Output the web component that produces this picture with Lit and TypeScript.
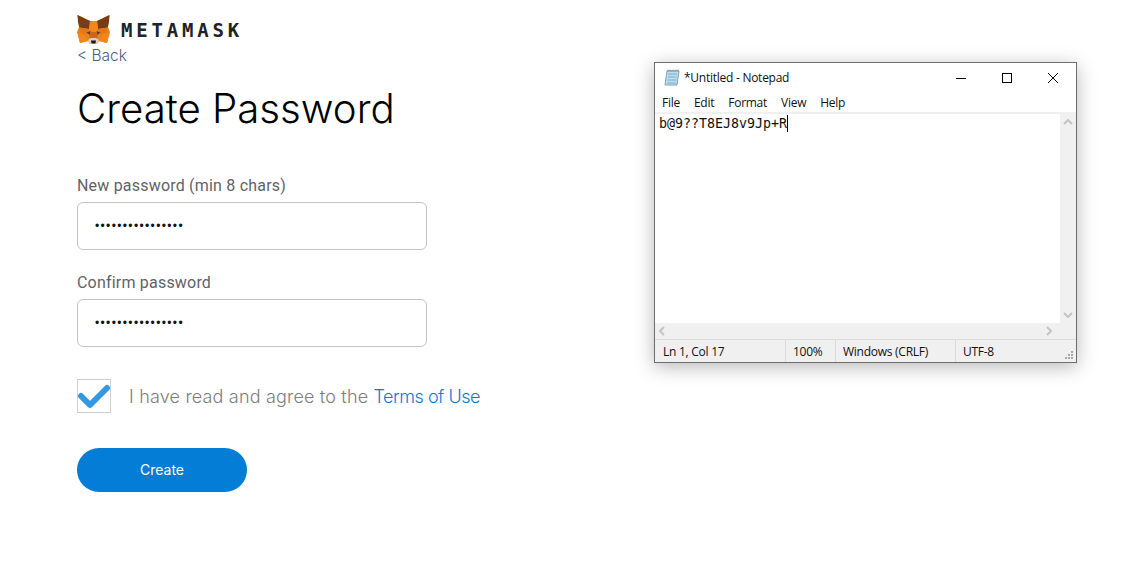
import { LitElement, html, css, svg } from "lit";
import { customElement } from "lit/decorators.js";

const fox = svg`<svg class="fox" viewBox="0 0 33 30" width="33" height="30">
  <polygon points="0.5,0 13,6 20,6 32.5,0 31,12 33,17 30,28 22,26 20,29 13,29 11,26 3,28 0,17 2,12" fill="#e8821e"/>
  <polygon points="0.5,0 13,6 12,14 2.5,12.5 1,7" fill="#763d16"/>
  <polygon points="32.5,0 20,6 21,14 30.5,12.5 32,7" fill="#763d16"/>
  <polygon points="13,6 20,6 21,14 16.5,17 12,14" fill="#f6851b"/>
  <polygon points="2.5,12.5 12,14 10,19 4,18" fill="#e4761b"/>
  <polygon points="30.5,12.5 21,14 23,19 29,18" fill="#e4761b"/>
  <polygon points="9.5,17.5 13.5,16 13,20" fill="#5a4030"/>
  <polygon points="23.5,17.5 19.5,16 20,20" fill="#5a4030"/>
  <polygon points="11,26 3,28 0.5,18 6,19" fill="#f6851b"/>
  <polygon points="22,26 30,28 32.5,18 27,19" fill="#f6851b"/>
  <polygon points="13,17 20,17 20.5,23 12.5,23" fill="#c9651c"/>
  <polygon points="11,25 14,23 19,23 22,25 20,29 13,29" fill="#e0cdbd"/>
  <polygon points="14,25.5 19,25.5 18.5,28.5 14.5,28.5" fill="#1b1b1b"/>
</svg>`;

const check = svg`<svg class="check" viewBox="0 0 34 34" width="34" height="34">
  <polyline points="4,17 13,26 30,9" fill="none" stroke="#3498e0" stroke-width="6" stroke-linejoin="round" stroke-linecap="round"/>
</svg>`;

const notepadIcon = svg`<svg viewBox="0 0 16 17" width="16" height="17">
  <polygon points="3,2 15,2 13,16 1,16" fill="#b9dcee" stroke="#7fa3b5" stroke-width="1"/>
  <path d="M4 5h9M4 8h8.6M3.6 11h8.6M3.2 14h8.6" stroke="#7fb0c9" stroke-width="1"/>
  <path d="M3.5 1.5h11" stroke="#777" stroke-width="1.6" stroke-dasharray="1 1"/>
</svg>`;

@customElement("app-root")
export class AppRoot extends LitElement {
  static styles = css`
    :host { display: block; width: 1123px; height: 577px; background: #fff; position: relative; overflow: hidden; font-family: "Liberation Sans", sans-serif; }
    .page { display: flex; flex-direction: column; align-items: flex-start; padding: 15px 0 0 77px; }
    .brand { display: flex; align-items: center; gap: 11px; height: 30px; }
    .fox { display: block; }
    .word { font-family: "DejaVu Sans Mono", monospace; font-weight: 700; font-size: 19px; letter-spacing: 3.8px; color: #1f2327; line-height: 30px; }
    .back { margin-top: 1px; font-family: Inter, sans-serif; font-weight: 300; font-size: 15.5px; color: #4f5f80; line-height: 20px; }
    h1 { margin: 19px 0 0; font-family: Inter, sans-serif; font-weight: 300; font-size: 40.2px; line-height: 48px; color: #000; }
    .lab { font-family: Roboto, sans-serif; font-size: 16px; letter-spacing: .2px; line-height: 19px; color: #5f6368; }
    .first { margin-top: 43px; }
    .second { margin-top: 23px; }
    .field { margin-top: 7px; box-sizing: border-box; width: 350px; height: 48px; border: 1px solid #c4c4c4; border-radius: 6px; display: flex; align-items: center; padding: 0 17px; font-family: "Liberation Sans", sans-serif; font-size: 12px; letter-spacing: 1.36px; color: #111; }
    .terms { display: flex; align-items: center; gap: 18px; margin-top: 32px; }
    .box { box-sizing: border-box; width: 34px; height: 34px; border: 1px solid #cfcfcf; display: block; }
    .box svg { display: block; margin: -1px; }
    .tt { font-family: Inter, sans-serif; font-weight: 300; font-size: 18px; letter-spacing: .18px; color: #7d7d7d; }
    .tt a { color: #0f78d0; text-decoration: none; letter-spacing: -.47px; }
    .btn { margin-top: 35px; width: 170px; height: 44px; border-radius: 22px; background: #037dd6; color: #fff; display: flex; align-items: center; justify-content: center; font-family: Inter, sans-serif; font-weight: 400; font-size: 14px; padding-bottom: 1px; box-sizing: border-box; }
    .win { position: absolute; left: 654px; top: 62px; width: 423px; height: 301px; box-sizing: border-box; border: 1px solid #6e6e6e; background: #fff; box-shadow: 0 4px 18px rgba(0,0,0,.28); display: flex; flex-direction: column; font-family: "Open Sans", "Noto Sans", sans-serif; font-size: 12px; letter-spacing: -.26px; color: #111; }
    .title { height: 29px; display: flex; align-items: center; padding-left: 9px; flex: none; }
    .title span { flex: 1; margin-left: 4px; }
    .ctl { width: 46px; height: 29px; display: flex; align-items: center; justify-content: center; }
    .menu { height: 20px; display: flex; gap: 14px; align-items: center; padding-left: 7px; flex: none; }
    .edit { flex: 1; display: flex; border-top: 2px solid #f0f0f0; min-height: 0; }
    .text { flex: 1; font-family: "DejaVu Sans Mono", monospace; font-size: 13.3px; letter-spacing: 0; line-height: 17px; padding: 1px 0 0 4px; color: #111; }
    .caret { display: inline-block; width: 1px; height: 17px; background: #000; vertical-align: top; }
    .vs { width: 16px; background: #f0f0f0; display: flex; flex-direction: column; justify-content: space-between; align-items: center; padding: 5px 0; box-sizing: border-box; }
    .hs { height: 16px; flex: none; background: #f0f0f0; display: flex; justify-content: space-between; align-items: center; padding: 0 24px 0 4px; }
    .status { height: 23px; flex: none; box-sizing: border-box; background: #f0f0f0; border-top: 1px solid #dcdcdc; display: flex; align-items: center; position: relative; }
    .cell { height: 100%; display: flex; align-items: center; padding: 1px 0 0 7px; box-sizing: border-box; border-left: 1px solid #dcdcdc; }
    .cell:first-child { border-left: none; padding-left: 8px; }
    .grip { position: absolute; right: 2px; bottom: 2px; }
  `;
  render() {
    const dots = "•".repeat(16);
    return html`
      <div class="page">
        <div class="brand">${fox}<span class="word">METAMASK</span></div>
        <div class="back">&lt; Back</div>
        <h1>Create Password</h1>
        <div class="lab first">New password (min 8 chars)</div>
        <div class="field">${dots}</div>
        <div class="lab second">Confirm password</div>
        <div class="field">${dots}</div>
        <div class="terms">
          <span class="box">${check}</span>
          <span class="tt">I have read and agree to the <a>Terms of Use</a></span>
        </div>
        <div class="btn">Create</div>
      </div>
      <div class="win">
        <div class="title">${notepadIcon}<span>*Untitled - Notepad</span>
          <div class="ctl"><svg width="12" height="12"><path d="M1 6.5h10" stroke="#000"/></svg></div>
          <div class="ctl"><svg width="12" height="12"><rect x="1.5" y="1.5" width="9" height="9" fill="none" stroke="#000"/></svg></div>
          <div class="ctl"><svg width="12" height="12"><path d="M1 1l10 10M11 1L1 11" stroke="#000"/></svg></div>
        </div>
        <div class="menu"><span>File</span><span>Edit</span><span>Format</span><span>View</span><span>Help</span></div>
        <div class="edit">
          <div class="text">b@9??T8EJ8v9Jp+R<span class="caret"></span></div>
          <div class="vs">
            <svg width="10" height="6"><path d="M1 5l4-4 4 4" fill="none" stroke="#c4c4c4" stroke-width="2"/></svg>
            <svg width="10" height="6"><path d="M1 1l4 4 4-4" fill="none" stroke="#c4c4c4" stroke-width="2"/></svg>
          </div>
        </div>
        <div class="hs">
          <svg width="6" height="10"><path d="M5 1L1 5l4 4" fill="none" stroke="#c4c4c4" stroke-width="2"/></svg>
          <svg width="6" height="10"><path d="M1 1l4 4-4 4" fill="none" stroke="#c4c4c4" stroke-width="2"/></svg>
        </div>
        <div class="status">
          <div class="cell" style="width:130px">Ln 1, Col 17</div>
          <div class="cell" style="width:50px">100%</div>
          <div class="cell" style="width:120px">Windows (CRLF)</div>
          <div class="cell">UTF-8</div>
          <svg class="grip" width="9" height="9" fill="#a8a8a8"><rect x="6" y="0" width="2" height="2"/><rect x="3" y="3" width="2" height="2"/><rect x="6" y="3" width="2" height="2"/><rect x="0" y="6" width="2" height="2"/><rect x="3" y="6" width="2" height="2"/><rect x="6" y="6" width="2" height="2"/></svg>
        </div>
      </div>`;
  }
}
